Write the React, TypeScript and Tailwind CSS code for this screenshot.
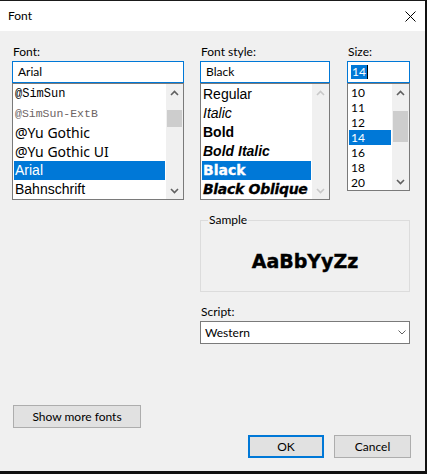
const FONTS = [
  { name: "@SimSun", cls: "font-['Liberation_Mono',monospace] text-[12px] text-black" },
  { name: "@SimSun-ExtB", cls: "font-['Liberation_Mono',monospace] text-[11.5px] text-[#6e6464]" },
  { name: "@Yu Gothic", cls: "font-['Noto_Sans',sans-serif] text-[14px] text-black" },
  { name: "@Yu Gothic UI", cls: "font-['Noto_Sans',sans-serif] text-[14px] text-black" },
  { name: "Arial", cls: "font-['Liberation_Sans',Arial,sans-serif] text-[14px]", sel: true },
  { name: "Bahnschrift", cls: "font-['Liberation_Sans',Arial,sans-serif] text-[14px] text-black" },
];

const STYLES = [
  { name: "Regular", cls: "font-['Liberation_Sans',Arial,sans-serif] text-[14px] text-black" },
  { name: "Italic", cls: "font-['Liberation_Sans',Arial,sans-serif] text-[14px] italic text-black" },
  { name: "Bold", cls: "font-['Liberation_Sans',Arial,sans-serif] text-[14px] font-bold text-black" },
  { name: "Bold Italic", cls: "font-['Liberation_Sans',Arial,sans-serif] text-[14px] font-bold italic text-black" },
  { name: "Black", cls: "font-['DejaVu_Sans',sans-serif] text-[14px] font-bold [-webkit-text-stroke:0.3px]", sel: true },
  { name: "Black Oblique", cls: "font-['DejaVu_Sans',sans-serif] text-[14px] font-bold italic tracking-[-0.3px] [-webkit-text-stroke:0.3px] text-black" },
];

const SIZES = ["10", "11", "12", "14", "16", "18", "20"];

function Chev({ dir, disabled }: { dir: "up" | "down"; disabled?: boolean }) {
  return (
    <svg width="9" height="6" viewBox="0 0 9 6" className={disabled ? "text-[#c8c8c8]" : "text-[#606060]"}>
      <path d={dir === "up" ? "M1 5 L4.5 1.5 L8 5" : "M1 1 L4.5 4.5 L8 1"} fill="none" stroke="currentColor" strokeWidth="1.6" />
    </svg>
  );
}

function ScrollBar({ thumb, disabled }: { thumb?: string; disabled?: boolean }) {
  return (
    <div className="w-[17px] shrink-0 bg-[#f0f0f0] flex flex-col">
      <div className="h-[17px] flex items-center justify-center"><Chev dir="up" disabled={disabled} /></div>
      <div className="flex-1">
        {thumb && <div className={"mx-[1px] bg-[#cdcdcd] " + thumb} />}
      </div>
      <div className="h-[17px] flex items-center justify-center"><Chev dir="down" disabled={disabled} /></div>
    </div>
  );
}

function Label({ children }: { children: React.ReactNode }) {
  return <div className="h-[17px] pl-[1px] text-[12px] leading-[16px] text-black">{children}</div>;
}

export default function App() {
  return (
    <div className="w-[427px] h-[474px] bg-[#111] font-['Lato',sans-serif]">
      <div className="w-[425px] h-[471px] bg-[#f0f0f0] border-t border-[#1a1a1a] flex flex-col">
        {/* title bar */}
        <div className="h-[30px] bg-white flex items-center justify-between pl-[8px] pr-[9px]">
          <span className="text-[12px] leading-[16px] text-black">Font</span>
          <svg width="11" height="11" viewBox="0 0 11 11" className="text-black">
            <path d="M0.5 0.5 L10.5 10.5 M10.5 0.5 L0.5 10.5" stroke="currentColor" strokeWidth="1" fill="none" />
          </svg>
        </div>

        <div className="px-[12px] pt-[13px] flex flex-col">
          <div className="flex">
            {/* font */}
            <div className="w-[172px]">
              <Label>Font:</Label>
              <div className="h-[22px] border border-[#0078d7] bg-white pl-[5px] text-[12px] leading-[20px] text-black">Arial</div>
              <div className="h-[117px] border border-[#7a7a7a] bg-white flex">
                <div className="flex-1 p-[1px] overflow-hidden">
                  {FONTS.map(f => (
                    <div key={f.name} className={"h-[19px] leading-[19px] pl-[1px] whitespace-nowrap " + f.cls + (f.sel ? " bg-[#0078d7] text-white" : "")}>
                      {f.name}
                    </div>
                  ))}
                </div>
                <ScrollBar thumb="mt-[9px] h-[17px]" />
              </div>
            </div>

            {/* font style */}
            <div className="w-[130px] ml-[16px]">
              <Label>Font style:</Label>
              <div className="h-[22px] border border-[#0078d7] bg-white pl-[5px] text-[12px] leading-[20px] text-black">Black</div>
              <div className="h-[117px] border border-[#7a7a7a] bg-white flex">
                <div className="flex-1 p-[1px] overflow-hidden">
                  {STYLES.map(s => (
                    <div key={s.name} className={"h-[19px] leading-[19px] pl-[1px] whitespace-nowrap " + s.cls + (s.sel ? " bg-[#0078d7] text-white" : "")}>
                      {s.name}
                    </div>
                  ))}
                </div>
                <ScrollBar disabled />
              </div>
            </div>

            {/* size */}
            <div className="w-[63px] ml-[17px]">
              <Label>Size:</Label>
              <div className="h-[22px] border border-[#0078d7] bg-white pl-[3px] flex items-center">
                <span className="bg-[#0078d7] text-white text-[12px] leading-[14px] px-[1px]">14</span>
                <span className="w-[1px] h-[14px] bg-black" />
              </div>
              <div className="h-[108px] border border-[#7a7a7a] bg-white flex">
                <div className="flex-1 p-[1px] overflow-hidden">
                  {SIZES.map(s => (
                    <div key={s} className={"h-[15px] leading-[15px] pl-[2px] text-[12px] " + (s === "14" ? "bg-[#0078d7] text-white" : "text-black")}>
                      {s}
                    </div>
                  ))}
                </div>
                <ScrollBar thumb="mt-[10px] h-[31px]" />
              </div>
            </div>
          </div>

          {/* sample + script */}
          <div className="ml-[188px] w-[210px] mt-[12px]">
            <fieldset className="border border-[#dcdcdc]">
              <legend className="ml-[7px] px-[1px] text-[12px] leading-[16px] text-black">Sample</legend>
              <div className="h-[63px] flex items-center justify-center pt-[3px]">
                <span className="font-['DejaVu_Sans',sans-serif] font-bold text-[19px] text-black [-webkit-text-stroke:0.4px]">AaBbYyZz</span>
              </div>
            </fieldset>
            <div className="mt-[12px]">
              <Label>Script:</Label>
              <div className="h-[23px] border border-[#7a7a7a] bg-white flex items-center justify-between pl-[4px] pr-[3px]">
                <span className="text-[12px] text-black">Western</span>
                <svg width="8" height="5" viewBox="0 0 8 5" className="text-[#606060]">
                  <path d="M0.5 0.5 L4 4 L7.5 0.5" fill="none" stroke="currentColor" strokeWidth="1" />
                </svg>
              </div>
            </div>
          </div>

          <button className="mt-[61px] ml-[1px] w-[128px] h-[23px] bg-[#e1e1e1] border border-[#adadad] text-[12px] text-black">
            Show more fonts
          </button>

          <div className="mt-[7px] pr-[2px] flex justify-end gap-[10px]">
            <button className="w-[76px] h-[23px] bg-[#e1e1e1] border-2 border-[#0078d7] text-[12px] text-black">OK</button>
            <button className="w-[77px] h-[23px] bg-[#e1e1e1] border border-[#adadad] text-[12px] text-black">Cancel</button>
          </div>
        </div>
      </div>
    </div>
  );
}
